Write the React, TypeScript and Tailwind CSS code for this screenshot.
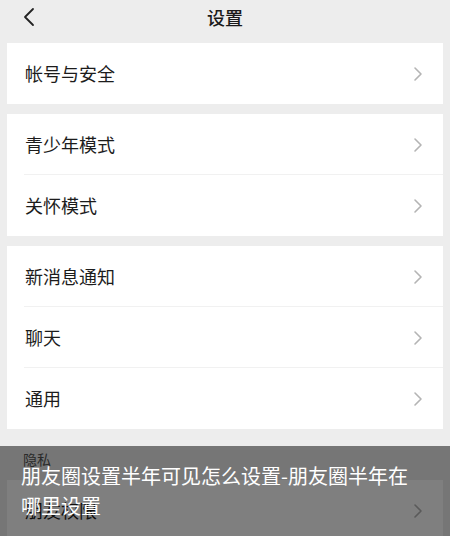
const font = { fontFamily: '"Noto Sans CJK SC", "Noto Sans", sans-serif' };

function Chevron() {
  return (
    <svg width="10" height="16" viewBox="0 0 10 16" fill="none" className="shrink-0">
      <path d="M2 2 L8 8 L2 14" stroke="#b4b4b4" strokeWidth="1.6" strokeLinecap="round" strokeLinejoin="round" />
    </svg>
  );
}

function Row({ label, divider }: { label: string; divider?: boolean }) {
  return (
    <div className="relative flex h-[61px] items-center justify-between pl-[18px] pr-[20px]">
      <span className="text-[18px] text-[#1c1c1c]">{label}</span>
      <Chevron />
      {divider && <div className="absolute bottom-0 left-[17px] right-0 h-px bg-[#f1f1f1]" />}
    </div>
  );
}

function Card({ items }: { items: string[] }) {
  return (
    <div className="mx-[7px] bg-white">
      {items.map((t, i) => (
        <Row key={t} label={t} divider={i < items.length - 1} />
      ))}
    </div>
  );
}

export default function App() {
  return (
    <div className="relative h-[536px] w-[450px] overflow-hidden bg-[#ededed]" style={font}>
      <header className="flex h-[36px] items-center justify-center relative">
        <svg width="14" height="20" viewBox="0 0 14 20" fill="none" className="absolute left-[22px] top-[7px]">
          <path d="M11 2 L3 10 L11 18" stroke="#222" strokeWidth="1.8" strokeLinecap="round" strokeLinejoin="round" />
        </svg>
        <h1 className="-mt-[2px] text-[18px] font-medium text-[#1a1a1a]">设置</h1>
      </header>
      <div className="mt-[7px] flex flex-col gap-[10px]">
        <Card items={["帐号与安全"]} />
        <Card items={["青少年模式", "关怀模式"]} />
        <Card items={["新消息通知", "聊天", "通用"]} />
      </div>
      <div className="px-[23px] pt-[20px] pb-[10px] text-[14px] text-[#555]">隐私</div>
      <Card items={["朋友权限"]} />
      <div className="absolute bottom-0 left-0 right-0 h-[90px] bg-black/50 pl-[21px] pr-[26px] pt-[15px]">
        <p className="text-[20px] leading-[30px] text-white">朋友圈设置半年可见怎么设置-朋友圈半年在哪里设置</p>
      </div>
    </div>
  );
}
